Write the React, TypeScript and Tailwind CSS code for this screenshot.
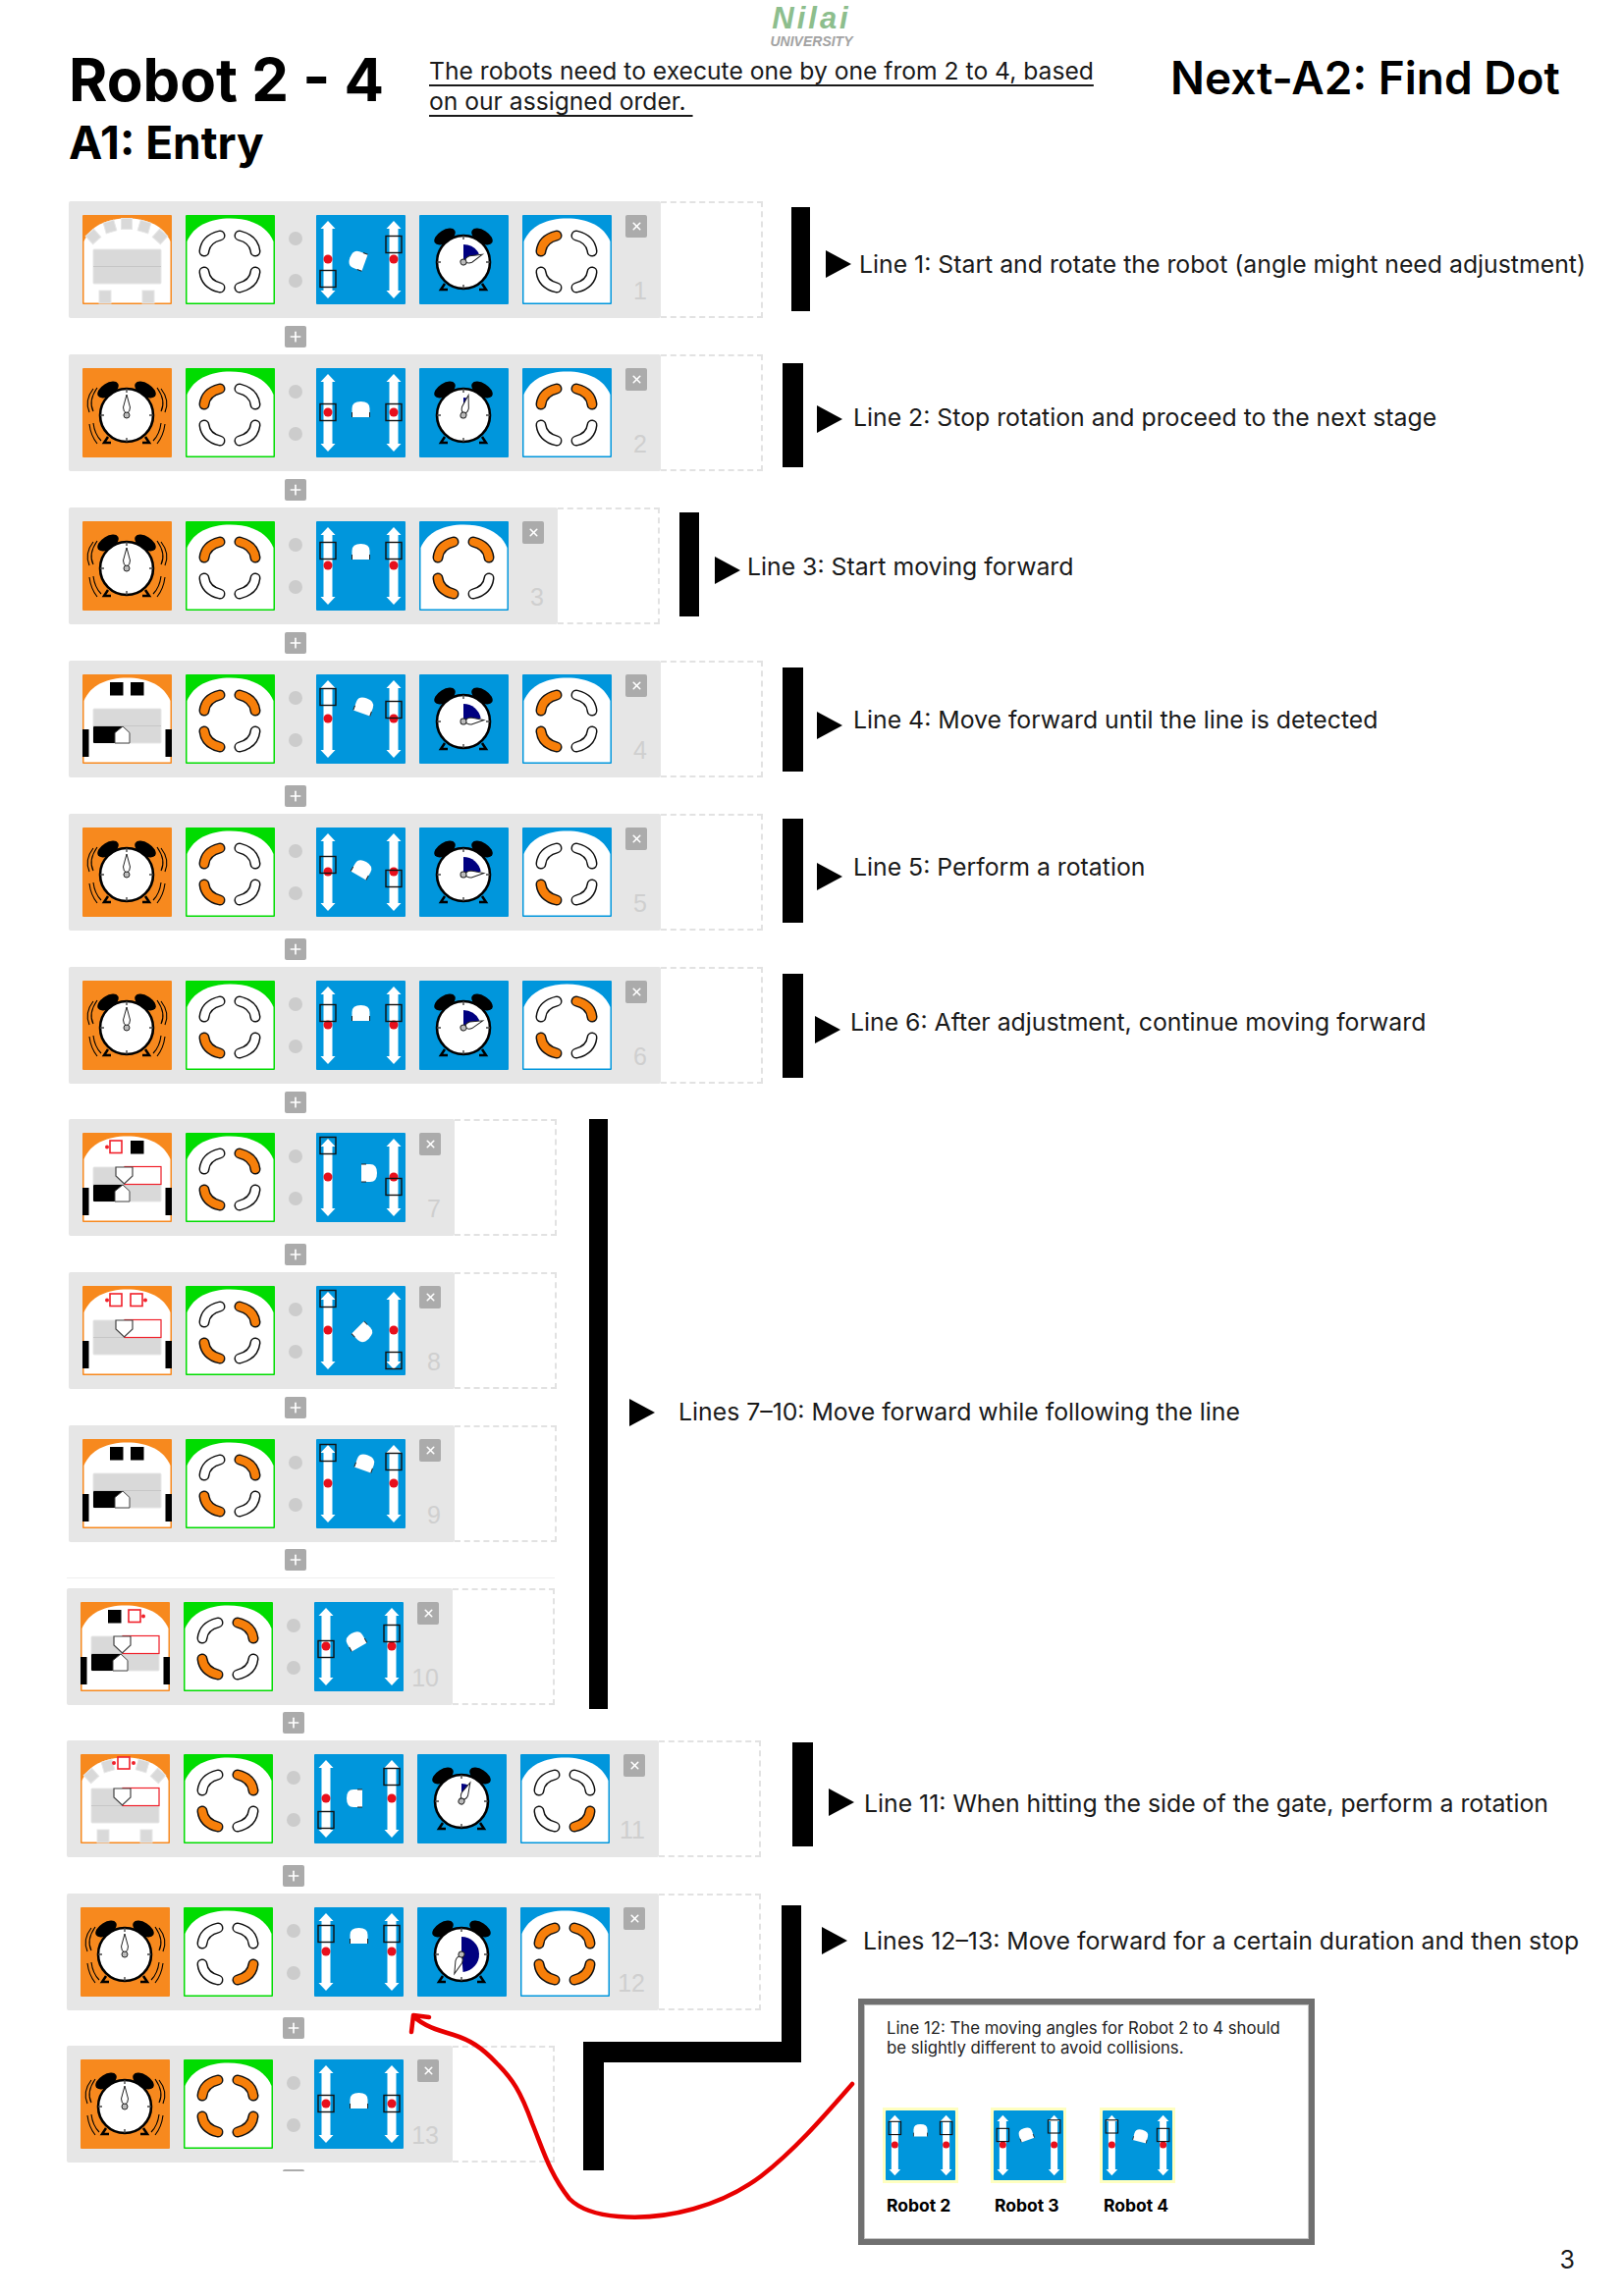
import { Plus, X } from 'lucide-react';
import type { ReactNode } from 'react';

type Spot = 'black' | 'red';
type Sensor =
  | { kind: 'clock' }
  | { kind: 'arc'; redCenter?: boolean; upperRed?: boolean }
  | { kind: 'line'; left: Spot; right: Spot; upperRed?: boolean; lowerBlack?: boolean };
type Motor = { l: number; r: number; x: number; y: number; rot: number };
type Wheels = [boolean, boolean, boolean, boolean];
type RowData = {
  n: number;
  sensor: Sensor;
  green: Wheels;
  motor: Motor;
  timer?: { hand: number; wedge: number };
  blue?: Wheels;
};

const ORANGE = '#F7891E';
const GREEN = '#00DC00';
const BLUE = '#0096DC';

function Frame({ color, children }: { color: string; children: ReactNode }) {
  return (
    <svg viewBox="0 0 91 91" className="block h-[91px] w-[91px] shrink-0">
      <rect width="91" height="91" rx="1" fill={color} />
      <path d="M1.5 27C8 11 25 3.5 45.5 3.5S83 11 89.5 27V89.5H1.5Z" fill="#fff" />
      {children}
    </svg>
  );
}

function Panel({ upperRed, lowerBlack }: { upperRed?: boolean; lowerBlack?: boolean }) {
  return (
    <g>
      <rect x="11" y="35" width="69" height="35" rx="1" fill="#D9D9D9" stroke="#E6E6E6" />
      <line x1="11" y1="52.5" x2="80" y2="52.5" stroke="#C6C6C6" />
      {upperRed && (
        <g>
          <rect x="43" y="34.5" width="37" height="18" fill="#fff" stroke="#F0202A" strokeWidth="1.2" />
          <path d="M34 35H51V44L42.5 52L34 44Z" fill="#fff" stroke="#444" strokeWidth="1.2" />
        </g>
      )}
      {lowerBlack && (
        <g>
          <rect x="11" y="53" width="30" height="17" rx="1" fill="#000" />
          <path d="M41 53L48 59.5V70H33V59.5Z" fill="#fff" stroke="#444" strokeWidth="1" />
        </g>
      )}
    </g>
  );
}

function SpotBox({ x, kind, dot }: { x: number; kind: Spot; dot: number }) {
  if (kind === 'black') return <rect x={x} y="8" width="13.5" height="13.5" fill="#000" />;
  return (
    <g>
      <circle cx={dot} cy="14.5" r="2" fill="#F0202A" />
      <rect x={x} y="8" width="12" height="12.5" fill="#fff" stroke="#F0202A" strokeWidth="1.6" />
    </g>
  );
}

function SensorBlock({ sensor }: { sensor: Sensor }) {
  if (sensor.kind === 'clock') {
    return (
      <svg viewBox="0 0 91 91" className="block h-[91px] w-[91px] shrink-0">
        <rect width="91" height="91" rx="1" fill={ORANGE} />
        <g fill="none" stroke="#000" strokeWidth="1.1">
          <path d="M15 20C8 30 8 38 11 44M11 21C4 30 4 38 7 45" />
          <path d="M76 20C83 30 83 38 80 44M80 21C87 30 87 38 84 45" />
          <path d="M11 56C12 64 15 70 19 74M7 57C8 65 11 72 15 77" />
          <path d="M80 56C79 64 76 70 72 74M84 57C83 65 80 72 76 77" />
        </g>
        <Clock hand={0} wedge={0} />
      </svg>
    );
  }
  const marks = [
    { x: 11, y: 22, r: -42 },
    { x: 28, y: 12, r: -16 },
    { x: 45, y: 9, r: 0 },
    { x: 63, y: 12, r: 16 },
    { x: 79, y: 22, r: 42 },
  ];
  return (
    <Frame color={ORANGE}>
      {sensor.kind === 'arc' ? (
        <g>
          {marks.map((m) => (
            <rect
              key={m.x}
              x={m.x - 5.5}
              y={m.y - 5.5}
              width="11"
              height="11"
              fill="#D9D9D9"
              stroke="#E6E6E6"
              transform={`rotate(${m.r} ${m.x} ${m.y})`}
            />
          ))}
          <rect x="17" y="77" width="12" height="13" fill="#D9D9D9" stroke="#E6E6E6" />
          <rect x="61" y="77" width="12" height="13" fill="#D9D9D9" stroke="#E6E6E6" />
          <Panel upperRed={sensor.upperRed} />
          {sensor.redCenter && (
            <g>
              <circle cx="34" cy="9" r="2" fill="#F0202A" />
              <circle cx="54" cy="9" r="2" fill="#F0202A" />
              <rect x="38" y="3" width="12" height="12" fill="#fff" stroke="#F0202A" strokeWidth="1.6" />
            </g>
          )}
        </g>
      ) : (
        <g>
          <rect x="0" y="56" width="6.5" height="28" fill="#000" />
          <rect x="84.5" y="56" width="6.5" height="28" fill="#000" />
          <SpotBox x={28} kind={sensor.left} dot={25} />
          <SpotBox x={49} kind={sensor.right} dot={64} />
          <Panel upperRed={sensor.upperRed} lowerBlack={sensor.lowerBlack} />
        </g>
      )}
    </Frame>
  );
}

function WheelBlock({ color, on }: { color: string; on: Wheels }) {
  const flips = ['', 'translate(90 0) scale(-1 1)', 'translate(0 95) scale(1 -1)', 'translate(90 95) scale(-1 -1)'];
  return (
    <Frame color={color}>
      {flips.map((t, i) => (
        <g key={i} transform={t} fill="none" strokeLinecap="round">
          <path d="M19 37Q20.5 24.5 35 21" stroke="#111" strokeWidth="11" />
          <path d="M19 37Q20.5 24.5 35 21" stroke={on[i] ? '#F77F0A' : '#fff'} strokeWidth="8" />
        </g>
      ))}
    </Frame>
  );
}

function arrowPath(x: number) {
  return `M${x} 6L${x + 7.5} 14H${x + 4.5}V77H${x + 7.5}L${x} 85L${x - 7.5} 77H${x - 4.5}V14H${x - 7.5}Z`;
}

function MotorBlock({ motor, className }: { motor: Motor; className: string }) {
  const { l, r, x, y, rot } = motor;
  return (
    <svg viewBox="0 0 91 91" className={className}>
      <rect width="91" height="91" rx="1" fill={BLUE} />
      <path d={arrowPath(12)} fill="#fff" />
      <path d={arrowPath(79)} fill="#fff" />
      <circle cx="12" cy="45" r="4.5" fill="#E8101C" />
      <circle cx="79" cy="45" r="4.5" fill="#E8101C" />
      <rect x="4" y={l - 8.5} width="16" height="17" fill="none" stroke="#111" strokeWidth="1.4" />
      <rect x="71" y={r - 8.5} width="16" height="17" fill="none" stroke="#111" strokeWidth="1.4" />
      <g transform={`translate(${x} ${y}) rotate(${rot})`}>
        <path d="M-9 8V-1Q-9-8 0-8T9-1V8Z" fill="#fff" />
        <path d="M-9 3V8M9 3V8" stroke="#222" strokeWidth="1" />
      </g>
    </svg>
  );
}

function sector(deg: number) {
  const a = (deg * Math.PI) / 180;
  const R = 18;
  const x = 45 + R * Math.sin(a);
  const y = 48 - R * Math.cos(a);
  return `M45 48V${48 - R}A${R} ${R} 0 ${deg > 180 ? 1 : 0} 1 ${x} ${y}Z`;
}

function Clock({ hand, wedge }: { hand: number; wedge: number }) {
  return (
    <g>
      <ellipse cx="26" cy="22" rx="12" ry="6.5" fill="#000" transform="rotate(-32 26 22)" />
      <ellipse cx="64" cy="22" rx="12" ry="6.5" fill="#000" transform="rotate(32 64 22)" />
      <path d="M26 70L22 76H29M64 70L68 76H61" fill="none" stroke="#000" strokeWidth="2.5" />
      <circle cx="45" cy="48" r="27" fill="#fff" stroke="#000" strokeWidth="2.6" />
      <path d="M45 21V25M45 71V75M18 48H22M68 48H72" stroke="#444" strokeWidth="1.4" />
      {wedge > 0 && <path d={sector(wedge)} fill="#000080" />}
      <g transform={`rotate(${hand} 45 48)`}>
        <path d="M45 27L48.5 40Q48.5 45 45 46Q41.5 45 41.5 40Z" fill="#fff" stroke="#222" strokeWidth="1" />
        <circle cx="45" cy="48" r="3" fill="#BBB" stroke="#222" strokeWidth="1" />
      </g>
    </g>
  );
}

function TimerBlock({ hand, wedge }: { hand: number; wedge: number }) {
  return (
    <svg viewBox="0 0 91 91" className="block h-[91px] w-[91px] shrink-0">
      <rect width="91" height="91" rx="1" fill={BLUE} />
      <Clock hand={hand} wedge={wedge} />
    </svg>
  );
}

function Strip({ data }: { data: RowData }) {
  return (
    <div className="flex shrink-0">
      <div className="flex h-[119px] gap-[14px] rounded-[2px] bg-[#E6E6E6] p-[14px]">
        <SensorBlock sensor={data.sensor} />
        <WheelBlock color={GREEN} on={data.green} />
        <div className="flex w-[14px] flex-col items-center gap-[29px] pt-[17px]">
          <div className="h-[14px] w-[14px] rounded-full bg-[#CCCCCC]" />
          <div className="h-[14px] w-[14px] rounded-full bg-[#CCCCCC]" />
        </div>
        <MotorBlock motor={data.motor} className="block h-[91px] w-[91px] shrink-0" />
        {data.timer && <TimerBlock hand={data.timer.hand} wedge={data.timer.wedge} />}
        {data.blue && <WheelBlock color={BLUE} on={data.blue} />}
        <div className="flex w-[22px] flex-col items-end">
          <div className="flex h-[23px] w-[22px] items-center justify-center rounded-[2px] bg-[#ABABAB] text-white">
            <X size={13} strokeWidth={3} />
          </div>
          <span className="mt-[41px] whitespace-nowrap font-['Liberation_Sans',sans-serif] text-[25px] leading-[26px] text-[#CFCFCF]">
            {data.n}
          </span>
        </div>
      </div>
      <div className="h-[119px] w-[104px] border-y-2 border-r-2 border-dashed border-[#E2E2E2]" />
    </div>
  );
}

function PlusGap({ className }: { className: string }) {
  return (
    <div className={className}>
      <div className="ml-[220px] flex h-[22px] w-[22px] items-center justify-center rounded-[2px] bg-[#ABABAB] text-white">
        <Plus size={16} strokeWidth={2.5} />
      </div>
    </div>
  );
}

function Triangle({ className }: { className: string }) {
  return (
    <svg viewBox="0 0 26 28" className={className}>
      <path d="M0 0L26 14L0 28Z" fill="#000" />
    </svg>
  );
}

type NoteProps = { wrap: string; bar: string; tri: string; text: string; children: ReactNode };

function Note({ wrap, bar, tri, text, children }: NoteProps) {
  return (
    <div className={`flex items-start ${wrap}`}>
      <div className={`shrink-0 bg-black ${bar}`} />
      <Triangle className={`h-[28px] w-[26px] shrink-0 ${tri}`} />
      <p className={`whitespace-nowrap text-[24.8px] leading-[30px] text-[#1A1A1A] ${text}`}>{children}</p>
    </div>
  );
}

const rows: RowData[] = [
  {
    n: 1,
    sensor: { kind: 'arc' },
    green: [false, false, false, false],
    motor: { l: 65, r: 30, x: 42, y: 46, rot: -70 },
    timer: { hand: 68, wedge: 62 },
    blue: [true, false, false, false],
  },
  {
    n: 2,
    sensor: { kind: 'clock' },
    green: [true, false, false, false],
    motor: { l: 45, r: 45, x: 45.5, y: 42, rot: 0 },
    timer: { hand: 14, wedge: 14 },
    blue: [true, true, false, false],
  },
  {
    n: 3,
    sensor: { kind: 'clock' },
    green: [true, true, false, false],
    motor: { l: 30, r: 30, x: 45.5, y: 31, rot: 0 },
    blue: [true, true, true, false],
  },
  {
    n: 4,
    sensor: { kind: 'line', left: 'black', right: 'black', lowerBlack: true },
    green: [true, true, true, false],
    motor: { l: 23, r: 36, x: 49, y: 32, rot: 20 },
    timer: { hand: 86, wedge: 80 },
    blue: [true, false, true, false],
  },
  {
    n: 5,
    sensor: { kind: 'clock' },
    green: [true, false, true, false],
    motor: { l: 38, r: 52, x: 47, y: 42, rot: 30 },
    timer: { hand: 86, wedge: 80 },
    blue: [false, false, true, false],
  },
  {
    n: 6,
    sensor: { kind: 'clock' },
    green: [false, false, true, false],
    motor: { l: 33, r: 33, x: 45.5, y: 33, rot: 0 },
    timer: { hand: 70, wedge: 65 },
    blue: [false, true, true, false],
  },
  {
    n: 7,
    sensor: { kind: 'line', left: 'red', right: 'black', upperRed: true, lowerBlack: true },
    green: [false, true, true, false],
    motor: { l: 13, r: 55, x: 54, y: 41, rot: 90 },
  },
  {
    n: 8,
    sensor: { kind: 'line', left: 'red', right: 'red', upperRed: true },
    green: [false, true, true, false],
    motor: { l: 13, r: 76, x: 48, y: 48, rot: 135 },
  },
  {
    n: 9,
    sensor: { kind: 'line', left: 'black', right: 'black', lowerBlack: true },
    green: [false, true, true, false],
    motor: { l: 14, r: 23, x: 50, y: 24, rot: 20 },
  },
  {
    n: 10,
    sensor: { kind: 'line', left: 'black', right: 'red', upperRed: true, lowerBlack: true },
    green: [false, true, true, false],
    motor: { l: 48, r: 32, x: 42, y: 39, rot: -30 },
  },
  {
    n: 11,
    sensor: { kind: 'arc', redCenter: true, upperRed: true },
    green: [false, true, true, false],
    motor: { l: 67, r: 23, x: 41, y: 45, rot: -90 },
    timer: { hand: 25, wedge: 25 },
    blue: [false, false, false, true],
  },
  {
    n: 12,
    sensor: { kind: 'clock' },
    green: [false, false, false, true],
    motor: { l: 27, r: 27, x: 45.5, y: 29, rot: 0 },
    timer: { hand: 200, wedge: 175 },
    blue: [true, true, true, true],
  },
  {
    n: 13,
    sensor: { kind: 'clock' },
    green: [true, true, true, true],
    motor: { l: 45, r: 45, x: 45.5, y: 42, rot: 0 },
  },
];

const samples: { label: string; motor: Motor; col: string }[] = [
  { label: 'Robot 2', motor: { l: 23, r: 23, x: 45.5, y: 26, rot: 0 }, col: 'w-[110px]' },
  { label: 'Robot 3', motor: { l: 32, r: 21, x: 42, y: 31, rot: -20 }, col: 'w-[111px]' },
  { label: 'Robot 4', motor: { l: 21, r: 32, x: 50, y: 33, rot: 15 }, col: 'w-[111px]' },
];

export default function App() {
  return (
    <div className="relative h-[2339px] w-[1653px] overflow-hidden bg-white font-['Inter',sans-serif] text-black">
      <div className="flex h-[52px] justify-center pt-[3px]">
        <div className="flex w-[88px] flex-col items-center italic">
          <span className="font-['Liberation_Sans',sans-serif] text-[31px] font-bold leading-[32px] tracking-[3px] text-[#8DBE8D]">Nilai</span>
          <span className="font-['Liberation_Sans',sans-serif] text-[14px] font-bold leading-[14px] text-[#A3A3A3]">UNIVERSITY</span>
        </div>
      </div>

      <header className="flex items-start pl-[70px]">
        <div className="w-[367px] shrink-0">
          <h1 className="text-[60px] font-bold leading-[58px]">Robot 2 - 4</h1>
          <h2 className="mt-[14px] text-[46px] font-bold leading-[42px]">A1: Entry</h2>
        </div>
        <p className="mt-[5px] w-[720px] shrink-0 text-[24.65px] leading-[31px] text-[#1A1A1A] underline underline-offset-[5px]">
          The robots need to execute one by one from 2 to 4, based
          <br />
          on our assigned order.&nbsp;
        </p>
        <p className="ml-[35px] -mt-[1px] whitespace-nowrap text-[46px] font-semibold leading-[56px]">Next-A2: Find Dot</p>
      </header>

      <div className="ml-[70px] mt-[39px]">
        <div className="flex">
          <Strip data={rows[0]} />
          <Note wrap="ml-[29px]" bar="mt-[6px] h-[106px] w-[19px]" tri="ml-[16px] mt-[50px]" text="ml-[8px] mt-[49px]">
            Line 1: Start and rotate the robot (angle might need adjustment)
          </Note>
        </div>
        <PlusGap className="h-[37px] pt-[8px]" />
        <div className="flex">
          <Strip data={rows[1]} />
          <Note wrap="ml-[20px]" bar="mt-[9px] h-[106px] w-[21px]" tri="ml-[14px] mt-[52px]" text="ml-[11px] mt-[49px]">
            Line 2: Stop rotation and proceed to the next stage
          </Note>
        </div>
        <PlusGap className="h-[37px] pt-[8px]" />
        <div className="flex">
          <Strip data={rows[2]} />
          <Note wrap="ml-[20px]" bar="mt-[5px] h-[106px] w-[20px]" tri="ml-[16px] mt-[50px]" text="ml-[7px] mt-[45px]">
            Line 3: Start moving forward
          </Note>
        </div>
        <PlusGap className="h-[37px] pt-[8px]" />
        <div className="flex">
          <Strip data={rows[3]} />
          <Note wrap="ml-[20px]" bar="mt-[7px] h-[106px] w-[21px]" tri="ml-[14px] mt-[52px]" text="ml-[11px] mt-[45px]">
            Line 4: Move forward until the line is detected
          </Note>
        </div>
        <PlusGap className="h-[37px] pt-[8px]" />
        <div className="flex">
          <Strip data={rows[4]} />
          <Note wrap="ml-[20px]" bar="mt-[5px] h-[106px] w-[21px]" tri="ml-[14px] mt-[50px]" text="ml-[11px] mt-[39px]">
            Line 5: Perform a rotation
          </Note>
        </div>
        <PlusGap className="h-[37px] pt-[8px]" />
        <div className="flex">
          <Strip data={rows[5]} />
          <Note wrap="ml-[20px]" bar="mt-[7px] h-[106px] w-[21px]" tri="ml-[12px] mt-[50px]" text="ml-[10px] mt-[41px]">
            Line 6: After adjustment, continue moving forward
          </Note>
        </div>
        <PlusGap className="h-[36px] pt-[8px]" />

        <div className="flex">
          <div className="shrink-0">
            <Strip data={rows[6]} />
            <PlusGap className="h-[37px] pt-[8px]" />
            <Strip data={rows[7]} />
            <PlusGap className="h-[37px] pt-[8px]" />
            <Strip data={rows[8]} />
            <PlusGap className="h-[47px] pt-[7px]" />
            <div className="-ml-[2px] -mt-[11px] mb-[10px] h-px w-[497px] bg-[#EEEEEE]" />
            <div className="-ml-[2px]">
              <Strip data={rows[9]} />
            </div>
          </div>
          <Note wrap="ml-[33px] h-[597px]" bar="h-[601px] w-[19px]" tri="ml-[22px] mt-[285px]" text="ml-[24px] mt-[283px]">
            Lines 7–10: Move forward while following the line
          </Note>
        </div>
        <PlusGap className="-ml-[2px] h-[36px] pt-[7px]" />

        <div className="-ml-[2px]">
          <div className="flex">
            <Strip data={rows[10]} />
            <Note wrap="ml-[32px]" bar="mt-[2px] h-[106px] w-[21px]" tri="ml-[16px] mt-[49px]" text="ml-[10px] mt-[49px]">
              Line 11: When hitting the side of the gate, perform a rotation
            </Note>
          </div>
          <PlusGap className="h-[37px] pt-[8px]" />

          <div className="flex">
            <div className="shrink-0">
              <Strip data={rows[11]} />
              <PlusGap className="h-[36px] pt-[7px]" />
              <Strip data={rows[12]} />
              <PlusGap className="h-[9px] overflow-hidden pt-[7px]" />
            </div>
            <div className="flex flex-col">
              <div className="flex h-[107px] items-start pl-[62px] pt-[34px]">
                <Triangle className="h-[28px] w-[26px] shrink-0" />
                <p className="-mt-[1px] ml-[16px] whitespace-nowrap text-[24.8px] leading-[30px] text-[#1A1A1A]">
                  Lines 12–13: Move forward for a certain duration and then stop
                </p>
              </div>
              <div className="ml-[99px] h-[251px] w-[465px] border-[6px] border-[#707070] pl-[23px] pt-[14px] shadow-[inset_0_0_0_1px_#C4C4C4]">
                <p className="text-[16.75px] leading-[20px] text-[#222222]">
                  Line 12: The moving angles for Robot 2 to 4 should
                  <br />
                  be slightly different to avoid collisions.
                </p>
                <div className="-ml-[4px] mt-[51px] flex">
                  {samples.map((s) => (
                    <div key={s.label} className={s.col}>
                      <div className="h-[77px] w-[77px] border-[3px] border-[#FFFFC0]">
                        <MotorBlock motor={s.motor} className="block h-[71px] w-[71px]" />
                      </div>
                      <p className="mt-[13px] pl-[4px] text-[17.5px] font-bold leading-[20px]">{s.label}</p>
                    </div>
                  ))}
                </div>
              </div>
            </div>
          </div>
        </div>
      </div>

      <p className="pr-[49px] text-right text-[25px] leading-[30px] text-[#1A1A1A]">3</p>

      <svg viewBox="0 0 1653 2339" className="pointer-events-none absolute left-0 top-0 h-[2339px] w-[1653px]">
        <path d="M796 1941H816V2101H615V2211H594V2080H796Z" fill="#000" />
        <path
          d="M868 2123C840 2155 810 2190 775 2217C735 2247 680 2262 630 2258C605 2256 590 2250 580 2240C560 2215 553 2190 542 2163C530 2130 522 2118 506 2102C490 2085 478 2078 462 2073C445 2068 432 2064 421 2054M437 2055L421 2053L419 2070"
          fill="none"
          stroke="#E80000"
          strokeWidth="4.5"
          strokeLinecap="round"
          strokeLinejoin="round"
        />
      </svg>
    </div>
  );
}
